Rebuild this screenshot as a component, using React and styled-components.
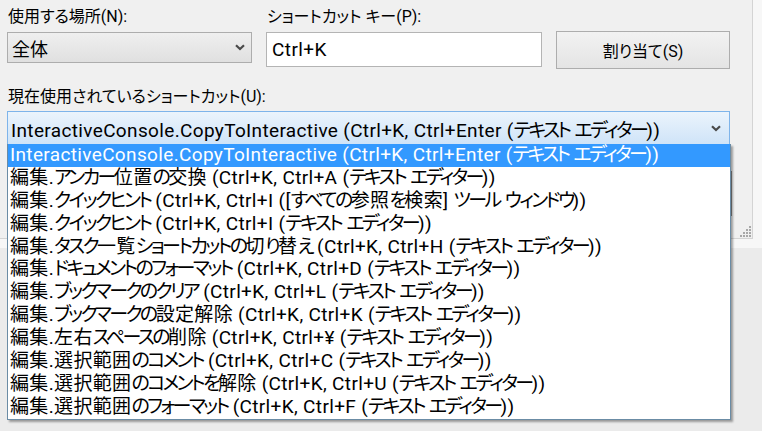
import styled, { createGlobalStyle } from "styled-components";

const GlobalStyle = createGlobalStyle`
  body {
    margin: 0;
    background: #ebebeb;
    font-family: Roboto, "Noto Sans CJK JP", sans-serif;
    font-feature-settings: "palt";
    color: #000;
  }
`;

const Screen = styled.div`
  position: relative;
  width: 762px;
  height: 431px;
  overflow: hidden;
  background: #ebebeb;
`;

const Dialog = styled.div`
  height: 248px;
  background: #f7f7f7;
  display: flex;
`;

const Panel = styled.div`
  position: relative;
  width: 753px;
  height: 239px;
  box-sizing: border-box;
  background: #f0f0f0;
  border-right: 1px solid #d4d4d4;
  border-bottom: 1px solid #d4d4d4;
  padding: 6px 0 0 7px;
`;

const Row = styled.div`
  display: flex;
  align-items: flex-end;
  gap: 14px;
`;

const Field = styled.div`
  display: flex;
  flex-direction: column;
  width: ${(p) => p.w}px;
  margin-top: ${(p) => p.mt || 0}px;
`;

const Label = styled.div`
  font-size: 16px;
  line-height: 22px;
  padding-left: 1px;
  margin-bottom: ${(p) => p.mb || 4}px;
  white-space: nowrap;
`;

const Select = styled.div`
  height: 31px;
  box-sizing: border-box;
  border: 1px solid #adadad;
  background: linear-gradient(#efefef, #e0e0e0);
  display: flex;
  align-items: center;
  justify-content: space-between;
  padding: 0 6px 0 4px;
  font-size: 18px;
`;

const Input = styled.div`
  height: 35px;
  margin-bottom: -4px;
  box-sizing: border-box;
  border: 1px solid #b4b4b4;
  background: #fff;
  display: flex;
  align-items: center;
  padding: 0 5px;
  font-size: 19px;
  letter-spacing: 0.4px;
`;

const Button = styled.div`
  width: ${(p) => p.w}px;
  height: 38px;
  margin-bottom: -6px;
  box-sizing: border-box;
  border: 1px solid #adadad;
  background: linear-gradient(#f2f2f2, #e4e4e4);
  display: flex;
  align-items: center;
  justify-content: center;
  font-size: 16px;
`;

const Combo = styled.div`
  width: 723px;
  height: 34px;
  box-sizing: border-box;
  border: 1px solid #7eb4ea;
  background: linear-gradient(#ebf4fc, #cfe4f8);
  display: flex;
  align-items: center;
  justify-content: space-between;
  padding: 0 8px 0 3px;
  font-size: 19px;
  letter-spacing: 0.35px;
  white-space: nowrap;
`;

const HiddenEdge = styled.div`
  margin: 26px 20px 0 auto;
  width: 40px;
  height: 45px;
  box-sizing: border-box;
  border: 1px solid #8a8a8a;
  background: #e4e4e4;
`;

const Grip = styled.svg`
  position: absolute;
  right: 1px;
  bottom: 1px;
`;

const DropList = styled.div`
  position: absolute;
  left: 7px;
  top: 144px;
  width: 724px;
  box-sizing: border-box;
  border: 1px solid #6b8ca5;
  border-top: none;
  background: #fff;
  box-shadow: 2px 2px 2px rgba(0, 0, 0, 0.35);
`;

const Item = styled.div`
  height: 22.9px;
  line-height: 22.9px;
  padding-left: 2px;
  font-size: 19px;
  letter-spacing: 0.35px;
  white-space: nowrap;
  background: ${(p) => (p.selected ? "#3399ff" : "transparent")};
  color: ${(p) => (p.selected ? "#fff" : "#000")};
`;

const Kana = styled.span`
  letter-spacing: -2.6px;
`;

const KANA = /([\u3040-\u30ff]+)/;

const jp = (text) =>
  text
    .split(KANA)
    .map((part, i) => (KANA.test(part) ? <Kana key={i}>{part}</Kana> : part));

const Chevron = () => (
  <svg width="10" height="7" viewBox="0 0 10 7">
    <path d="M1 1.2 L5 5 L9 1.2" fill="none" stroke="#4a4a4a" strokeWidth="2.2" />
  </svg>
);

const items = [
  "InteractiveConsole.CopyToInteractive (Ctrl+K, Ctrl+Enter (テキスト エディター))",
  "編集.アンカー位置の交換 (Ctrl+K, Ctrl+A (テキスト エディター))",
  "編集.クイックヒント (Ctrl+K, Ctrl+I ([すべての参照を検索] ツール ウィンドウ))",
  "編集.クイックヒント (Ctrl+K, Ctrl+I (テキスト エディター))",
  "編集.タスク一覧ショートカットの切り替え (Ctrl+K, Ctrl+H (テキスト エディター))",
  "編集.ドキュメントのフォーマット (Ctrl+K, Ctrl+D (テキスト エディター))",
  "編集.ブックマークのクリア (Ctrl+K, Ctrl+L (テキスト エディター))",
  "編集.ブックマークの設定解除 (Ctrl+K, Ctrl+K (テキスト エディター))",
  "編集.左右スペースの削除 (Ctrl+K, Ctrl+¥ (テキスト エディター))",
  "編集.選択範囲のコメント (Ctrl+K, Ctrl+C (テキスト エディター))",
  "編集.選択範囲のコメントを解除 (Ctrl+K, Ctrl+U (テキスト エディター))",
  "編集.選択範囲のフォーマット (Ctrl+K, Ctrl+F (テキスト エディター))",
];

const gripDots = [
  [9, 0], [6, 3], [9, 3], [3, 6], [6, 6], [9, 6], [0, 9], [3, 9], [6, 9], [9, 9],
];

const App = () => {
  return (
    <Screen>
      <GlobalStyle />
      <Dialog>
        <Panel>
          <Row>
            <Field w={245}>
              <Label>使用する場所(N):</Label>
              <Select>
                <span>全体</span>
                <Chevron />
              </Select>
            </Field>
            <Field w={276}>
              <Label>ショートカット キー(P):</Label>
              <Input>Ctrl+K</Input>
            </Field>
            <Button w={174}>割り当て(S)</Button>
          </Row>
          <Field w={723} mt={23}>
            <Label mb={3}>現在使用されているショートカット(U):</Label>
            <Combo>
              <span>{jp(items[0])}</span>
              <Chevron />
            </Combo>
          </Field>
          <HiddenEdge />
          <Grip width="11" height="11" viewBox="0 0 11 11">
            {gripDots.map(([x, y]) => (
              <rect key={`${x}-${y}`} x={x} y={y} width="2" height="2" fill="#a8a8a8" />
            ))}
          </Grip>
        </Panel>
      </Dialog>
      <DropList>
        {items.map((t, i) => (
          <Item key={i} selected={i === 0}>
            {jp(t)}
          </Item>
        ))}
      </DropList>
    </Screen>
  );
};

export default App;
